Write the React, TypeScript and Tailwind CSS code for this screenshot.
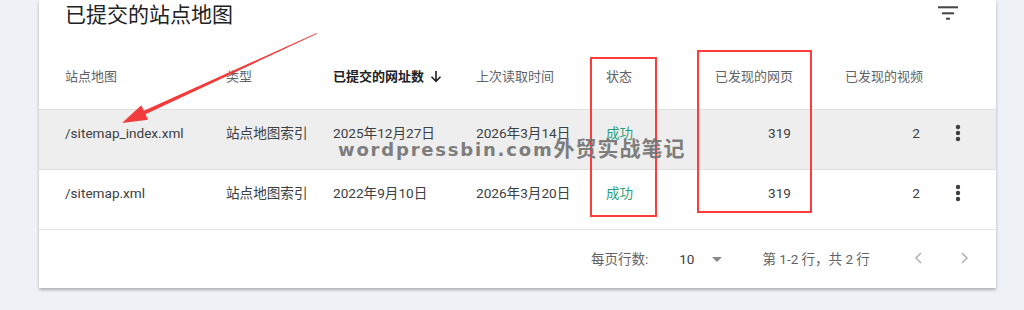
import React from "react";

const font = { fontFamily: 'Roboto, "Noto Sans CJK SC", sans-serif' };

function Kebab() {
  return (
    <svg width="6" height="18" viewBox="0 0 6 18">
      <circle cx="3" cy="3" r="2.2" fill="#3c4043" />
      <circle cx="3" cy="9" r="2.2" fill="#3c4043" />
      <circle cx="3" cy="15" r="2.2" fill="#3c4043" />
    </svg>
  );
}

type Row = { name: string; type: string; submitted: string; read: string; pages: string; videos: string };

const rows: Row[] = [
  { name: "/sitemap_index.xml", type: "站点地图索引", submitted: "2025年12月27日", read: "2026年3月14日", pages: "319", videos: "2" },
  { name: "/sitemap.xml", type: "站点地图索引", submitted: "2022年9月10日", read: "2026年3月20日", pages: "319", videos: "2" },
];

const cols = "grid grid-cols-[161px_107px_143px_130px_94px_93px_130px_73px] items-start pl-[26px]";

export default function App() {
  return (
    <div className="relative h-[310px] w-[1024px] overflow-hidden bg-[#eef2f6] pl-[39px]" style={font}>
      <div className="flex w-[957px] flex-col bg-white shadow-[0_2px_3px_rgba(0,0,0,0.28)]">
        {/* title */}
        <div className="flex h-[50px] items-start justify-between pl-[26px] pr-[38px]">
          <div className="text-[21px] leading-[30px] text-[#202124]">已提交的站点地图</div>
          <svg width="20" height="14" viewBox="0 0 20 14" className="mt-[6px]">
            <rect x="0" y="0.3" width="20" height="2" fill="#444" />
            <rect x="4" y="6.3" width="12" height="2" fill="#444" />
            <rect x="8" y="11.7" width="4" height="2" fill="#444" />
          </svg>
        </div>
        {/* header */}
        <div className={`${cols} h-[59px] pt-[19px] text-[13px] leading-[16px] text-[#5f6368]`}>
          <div>站点地图</div>
          <div>类型</div>
          <div className="flex h-[16px] items-center gap-[6px] font-bold text-[#202124]">
            <span>已提交的网址数</span>
            <svg width="12" height="13" viewBox="0 0 12 13" className="-mt-[2px]">
              <path d="M6 1v10M1.5 6.8L6 11.3l4.5-4.5" stroke="#202124" strokeWidth="1.6" fill="none" />
            </svg>
          </div>
          <div>上次读取时间</div>
          <div>状态</div>
          <div className="text-right">已发现的网页</div>
          <div className="text-right">已发现的视频</div>
          <div />
        </div>
        {/* rows */}
        {rows.map((r, i) => (
          <div
            key={r.name}
            className={`${cols} h-[60px] border-t border-[#e0e0e0] pt-[15px] text-[13.6px] leading-[16px] text-[#3c4043] ${i === 0 ? "bg-[#eeeeee]" : "bg-white"}`}
          >
            <div>{r.name}</div>
            <div>{r.type}</div>
            <div>{r.submitted}</div>
            <div>{r.read}</div>
            <div className="text-[#2e9f7c]">成功</div>
            <div className="pr-[2px] text-right">{r.pages}</div>
            <div className="pr-[3px] text-right">{r.videos}</div>
            <div className="flex justify-center pr-[3px]">
              <div className="-mt-[1px]">
                <Kebab />
              </div>
            </div>
          </div>
        ))}
        {/* footer */}
        <div className="flex h-[59px] items-center border-t border-[#e6e6e6] pl-[552px] text-[13.5px] leading-[16px] text-[#5f6368]">
          <span>每页行数:</span>
          <span className="ml-[31px] text-[#3c4043]">10</span>
          <svg width="10" height="5" viewBox="0 0 10 5" className="ml-[18px]">
            <path d="M0 0h10L5 5z" fill="#8a8a8a" />
          </svg>
          <span className="ml-[40px]">第 1-2 行，共 2 行</span>
          <svg width="8" height="12" viewBox="0 0 8 12" className="ml-[44px] -mt-[2px]">
            <path d="M7 1L2 6l5 5" stroke="#b0b0b0" strokeWidth="1.5" fill="none" />
          </svg>
          <svg width="8" height="12" viewBox="0 0 8 12" className="ml-[39px] -mt-[2px]">
            <path d="M1 1l5 5-5 5" stroke="#b0b0b0" strokeWidth="1.5" fill="none" />
          </svg>
        </div>
      </div>

      {/* annotation overlays */}
      <div className="pointer-events-none absolute left-[590px] top-[57px] h-[160px] w-[67px] border-2 border-[#ff3b3b]" />
      <div className="pointer-events-none absolute left-[697px] top-[50px] h-[163px] w-[115px] border-2 border-[#ff3b3b]" />
      <svg className="pointer-events-none absolute left-0 top-0" width="1024" height="310" viewBox="0 0 1024 310">
        <polygon
          points="316.6,33 317,33.8 145.5,114.3 148,119.8 122,123 141.3,105.2 143.9,110.7"
          fill="#f23b3b"
        />
      </svg>
      <div
        className="pointer-events-none absolute left-[338px] top-[135px] flex items-baseline whitespace-nowrap font-bold text-[#747474]"
        style={{ opacity: 0.92 }}
      >
        <span className="text-[18px] leading-[24px] tracking-[1.8px]" style={{ fontFamily: '"DejaVu Sans", sans-serif' }}>
          wordpressbin.com
        </span>
        <span className="text-[21px] leading-[24px] tracking-[1px]" style={{ fontFamily: '"Noto Sans CJK SC", sans-serif' }}>
          外贸实战笔记
        </span>
      </div>
    </div>
  );
}
